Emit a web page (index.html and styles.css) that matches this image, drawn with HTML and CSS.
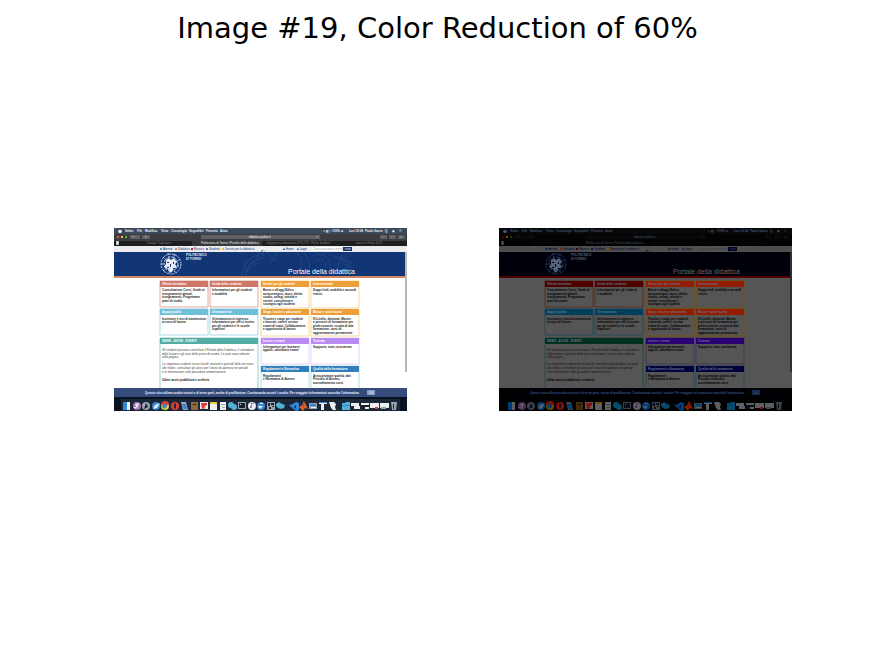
FILE: index.html
```html
<!DOCTYPE html>
<html lang="en">
<head>
<meta charset="utf-8">
<meta name="viewport" content="width=device-width, initial-scale=1">
<title>Image #19, Color Reduction of 60%</title>
<link rel="stylesheet" href="styles.css">
</head>
<body>
<main class="figure">
<h1 class="figure-title">Image #19, Color Reduction of 60%</h1>
<div class="panels">
<svg class="panel original" viewBox="0 0 293 183" role="img" aria-label="Original image">
<defs>
<g id="capture">
<rect class="page" width="293" height="183"/>
<rect class="menubar" width="293" height="6"/>
<rect class="toolbar" y="6" width="293" height="7"/>
<rect class="tabs" y="13" width="293" height="6"/>
<rect class="tab-active" x="78" y="13" width="70" height="6"/>
<rect class="links" y="18" width="293" height="6"/>
<g class="t3 bold pale">
<path d="M5 2h2l1 1-1 2H5L4 3z"/>
<text x="11" y="4">Safari</text><text x="23" y="4">File</text><text x="31" y="4">Modifica</text><text x="47" y="4">Vista</text><text x="57" y="4">Cronologia</text><text x="75" y="4">Segnalibri</text><text x="92" y="4">Finestra</text><text x="106" y="4">Aiuto</text>
<text x="209" y="4">⌁ ◧ ⌂ 100% ▰</text><text x="235" y="4">Lun 15:04</text><text x="251" y="4">Paolo Garza</text><text x="271" y="4">Q</text><text x="278" y="4">◉</text><text x="285" y="4">☰</text>
</g>
<path class="red" d="M3 8h2v2H3z"/><path class="amber" d="M7 8h2v2H7z"/><path class="green" d="M11 8h2v2h-2z"/>
<path class="button" d="M16 7h10v4H16zM28 7h8v4h-8zM87 7h119v4H87zM266 7h7v4h-7zM275 7h7v4h-7zM284 7h7v4h-7z"/>
<g class="t3 pale"><text x="18" y="10">‹ ›</text><text x="31" y="10">▯</text><text x="135" y="10">didattica.polito.it</text><text x="202" y="10">×</text><text x="268" y="10">↓</text><text x="277" y="10">↑</text><text x="286" y="10">+</text></g>
<path class="leaf" d="M2 13h3v4H2z"/><path class="page" d="M3 14h1v2H3z"/>
<g class="t3 dim"><text x="33" y="16">Google Traduttore</text><text x="153" y="16">Ingegneria informatica POLITO · Polito Studenti</text><text x="242" y="16">annunci Polito 2018</text></g>
<text class="t3 pale" x="87" y="16">Politecnico di Torino | Portale della didattica</text>
<path class="cyan" d="M46 20h2v2h-2z"/><path class="orange" d="M61 20h2v2h-2z"/><path class="crimson" d="M77 20h2v2h-2z"/><path class="violet" d="M92 20h2v2h-2z"/><path class="amber" d="M108 20h2v2h-2z"/>
<g class="t3 navy-ink"><text x="49" y="22">Ateneo</text><text x="64" y="22">Didattica</text><text x="80" y="22">Ricerca</text><text x="95" y="22">Studenti</text><text x="111" y="22">Servizi per la didattica</text><text x="169" y="22">■ Home</text><text x="183" y="22">■ Login</text></g>
<path class="page" d="M198 19h32v4h-32z"/><text class="t3 muted" x="199" y="22">Cerca persone e strutture</text>
<path class="navy" d="M229 19h9v4h-9z"/><text class="t3 pale" x="231" y="22">it en</text>
<path class="banner" d="M0 24h291v24H0z"/>
<g class="watermark"><path d="M128 48a22 22 0 0 1 22-22M132 48a18 18 0 0 1 18-18M182 25a14 14 0 0 1 0 23M190 25a28 28 0 0 1 5 23M153 24l9 10M164 24l-8 12M197 29c9-6 22 0 19 12M202 33c6-4 13 2 9 9M220 28l18 7M229 26l-7 17"/><text class="mark" x="134" y="46" transform="rotate(-48 134 46)">POLITE</text><text class="mark" x="226" y="29" transform="rotate(62 226 29)">TOR</text></g>
<g class="seal"><circle cx="57" cy="36" r="10"/><circle cx="57" cy="36" r="7"/><path d="M49 29l3 3M54 25l1 4M61 26l-2 4M66 31l-4 3M47 36h4M63 38h4M49 43l4-3M60 43l3 2M55 45l1-4"/><path class="seal-body" d="M52 32l3-2 2 2 3-2 3 4-2 2 2 3-4 3-2 3-3-4-4-2 2-3z"/><path class="seal-detail" d="M53 34h2v1h-2zM59 34h1v2h-1zM56 36h1v3h-1zM53 39h2v1h-2zM59 40h2v1h-2z"/></g>
<g class="brand"><text x="72" y="28">POLITECNICO</text><text x="72" y="32">DI TORINO</text></g>
<text class="portal" x="174" y="46">Portale della didattica</text>
<rect class="rule" y="48" width="291" height="2"/>

<path class="salmon-line" d="M46 53h48v26H46zM96 53h48v26H96z"/>
<path class="gold-line" d="M147 53h48v27h-48zM197 53h48v27h-48zM147 82h48v26h-48zM197 82h48v26h-48z"/>
<path class="sky-line" d="M46 81h48v26H46zM96 81h48v26H96z"/>
<path class="teal-line" d="M46 110h98v60H46z"/>
<path class="purple-line" d="M147 110h48v26h-48zM197 110h48v26h-48z"/>
<path class="azure-line" d="M147 138h48v32h-48zM197 138h48v32h-48z"/>
<path class="salmon" d="M46 53h48v6H46zM96 53h48v6H96z"/>
<path class="gold" d="M147 53h48v6h-48zM197 53h48v6h-48zM147 81h48v6h-48zM197 81h48v6h-48z"/>
<path class="sky" d="M46 81h48v6H46zM96 81h48v6H96z"/>
<path class="teal" d="M46 110h98v6H46z"/>
<path class="purple" d="M147 110h48v6h-48zM197 110h48v6h-48z"/>
<path class="azure" d="M147 138h48v6h-48zM197 138h48v6h-48z"/>
<g class="card-title">
<text x="48" y="57">Offerta formativa</text><text x="98" y="57">Guida dello studente</text><text x="149" y="57">Servizi per gli studenti</text><text x="199" y="57">Internazionale</text>
<text x="48" y="85">Apply@polito</text><text x="98" y="85">Orientamento</text><text x="149" y="85">Stage, tirocini e placement</text><text x="199" y="85">Master e post laurea</text>
<text x="48" y="114">NEWS - AVVISI - EVENTI</text><text x="149" y="114">Lauree e esami</text><text x="199" y="114">Tutorato</text>
<text x="149" y="142">Regolamenti e Normativa</text><text x="199" y="142">Qualità della formazione</text>
</g>
<g class="copy">
<text x="48" y="63">Consultazione Corsi, Guide ai</text><text x="48" y="67">insegnamenti attivati,</text><text x="48" y="70">insegnamenti, Programma</text><text x="48" y="74">piani di studio</text>
<text x="98" y="63">Informazioni per gli studenti</text><text x="98" y="67">e modalità</text>
<text x="149" y="63">Borse e alloggi Edisu,</text><text x="149" y="67">assicurazione, tasse, diritto</text><text x="149" y="70">studio, collegi, attività e</text><text x="149" y="74">servizi, consulenza e</text><text x="149" y="77">sostegno agli studenti</text>
<text x="199" y="63">Doppi titoli, mobilità e accordi</text><text x="199" y="67">estero</text>
<text x="48" y="92">Iscrizione e test di ammissione</text><text x="48" y="95">ai corsi di laurea</text>
<text x="98" y="92">Orientamento in ingresso</text><text x="98" y="95">informazioni per chi si iscrive</text><text x="98" y="99">per gli studenti e le scuole</text><text x="98" y="102">superiori</text>
<text x="149" y="92">Tirocini e stage per studenti</text><text x="149" y="95">e laureati, career service</text><text x="149" y="99">esami di stato, Collaborazioni</text><text x="149" y="102">e opportunità di lavoro</text>
<text x="199" y="92">III Livello, dottorati, Master</text><text x="199" y="95">e percorsi di formazione per</text><text x="199" y="99">professionisti, scuola di alta</text><text x="199" y="102">formazione, corsi di</text><text x="199" y="106">aggiornamento permanente</text>
<text x="149" y="120">Informazioni per laurearsi</text><text x="149" y="123">appelli, calendario esami</text><text x="199" y="120">Supporto, tutor, assistenza</text>
<text x="149" y="149">Regolamenti</text><text x="149" y="152">e Normativa di Ateneo</text>
<text x="199" y="149">Assicurazione qualità, dati</text><text x="199" y="152">Presidio di Ateneo,</text><text x="199" y="156">accreditamento corsi</text>
<text x="48" y="153">Ultimi avvisi pubblicati e archivio</text>
</g>
<g class="copy light">
<text x="48" y="123">Gli studenti possono consultare il Portale della Didattica, il calendario</text><text x="48" y="127">delle lezioni e gli orari delle prove di esame. Le aule sono indicate</text><text x="48" y="130">nella pagina.</text>
<text x="48" y="137">La segreteria studenti riceve lunedì, martedì e giovedì dalle ore nove</text><text x="48" y="141">alle tredici, consultare gli avvisi per l'orario di apertura nei periodi</text><text x="48" y="145">e le informazioni sulle procedure amministrative.</text>
</g>
<path class="scroll" d="M291 24h2v120h-2z"/>
<path class="notice" d="M0 160h293v9H0z"/>
<text class="notice-copy" x="31" y="166">Questo sito utilizza cookie tecnici e di terze parti, anche di profilazione. Continuando accetti i cookie. Per maggiori informazioni consulta l'informativa.</text>
<path class="ok" d="M253 162h8v5h-8z"/><text class="t3 pale" x="255" y="166">OK</text>
<path class="dock" d="M0 169h293v14H0z"/><path class="dock-shelf" d="M7 171h279v12H7z"/>
<g class="dock-icons">
<path class="w" d="M9 174h7v8H9z"/><path class="b" d="M9 174h4v8H9z"/>
<circle class="v" cx="23" cy="178" r="4"/><path class="w" d="M21 176l4-1-2 6zM19 179h3v2z"/>
<circle class="s" cx="32" cy="178" r="4"/><path class="d" d="M30 181l2-6 2 4z"/>
<circle class="b" cx="42" cy="178" r="4"/><path class="w" d="M39 181l2-4 5-2-3 5z"/>
<circle class="y" cx="51" cy="178" r="4"/><path class="r" d="M47 177a4 4 0 0 1 8 0z"/><path class="g" d="M47 178l4 4-1-5z"/><circle class="b" cx="51" cy="178" r="2"/>
<circle class="r" cx="61" cy="178" r="4"/><ellipse class="d" cx="61" cy="178" rx="1" ry="3"/>
<path class="s" d="M67 174h5l2 8h-5z"/><path class="b" d="M68 176h3l3 5h-4z"/>
<path class="n" d="M77 174h7v8h-7z"/><path class="d" d="M79 176h3v1h-3z"/>
<path class="w" d="M86 174h8v7h-8z"/><path class="r" d="M87 175h6v2l-3 2 2 1-4 1z"/>
<path class="w" d="M96 174h7v8h-7z"/><path class="y" d="M96 174h7v2h-7z"/>
<path class="w" d="M106 174h6v8h-6z"/><path class="s" d="M107 176h4v1h-4zM108 179h3v1h-3z"/>
<circle class="c" cx="117" cy="177" r="3"/><circle class="c" cx="120" cy="179" r="3"/>
<path class="s" d="M124 174h8v7h-8z"/><path class="d" d="M125 175h6v5h-6z"/><path class="w" d="M126 176h1v1h-1z"/>
<circle class="w" cx="138" cy="178" r="4"/><path class="v" d="M137 175h3v1h-2v4h-2v-2h1z"/>
<circle class="b" cx="147" cy="178" r="4"/><path class="w" d="M144 178h5l-3 3zM146 175h3v1h-3z"/>
<path class="s" d="M153 174h8v8h-8z"/><path class="d" d="M154 175h2v3h-2zM157 175h3v2h-3zM155 179h2v2h-2zM158 178h2v1h-2z"/>
<path class="c" d="M162 176l3-2 3 2 3 1-1 3-3 1-3-1-2-2z"/>
<path class="b" d="M182 174l3 1v7l-3 1-6-5-1-2 2 1z"/><path class="d" d="M182 177v4l-2-2z"/>
<path class="o" d="M185 179l3-2 2-4 4 8-3-1-2 3z"/><path class="r" d="M188 178l2-5v8z"/>
<path class="s" d="M195 175h8v6h-8z"/><path class="b" d="M196 176h6v2h-6z"/><path class="w" d="M197 179h5v1h-5z"/>
<path class="w" d="M205 174h8v2h-3v6h-3v-6h-2z"/><path class="b" d="M205 174h8v1h-8z"/>
<path class="w" d="M215 174h5l2 2-1 3 1 3h-3l-2-2-1-3z"/>
<path class="c" d="M228 175h3l1-1h4v8h-8z"/><path class="b" d="M228 177h8v1h-8z"/>
<path class="w" d="M237 175h8v3h1v3h-6v-3h-3z"/><path class="d" d="M247 175h8v6h-8z"/><path class="w" d="M247 175h8v2h-8zM251 179h4v2h-4z"/>
<path class="w" d="M256 175h9v5h-9zM266 175h9v5h-9z"/><path class="r" d="M261 179h3v2h-3z"/><path class="s" d="M267 179h5v2h-5z"/>
<path class="s" d="M277 174h6l-1 8h-4z"/><path class="d" d="M279 176h1v5h-1z"/>
</g>
</g>
</defs>
<use href="#capture"/>
</svg>
<svg class="panel reduced" viewBox="0 0 293 183" role="img" aria-label="Image with colors reduced by 60%"><use href="#capture"/></svg>
</div>
</main>
</body>
</html>
```
FILE: styles.css
```css
* { box-sizing: border-box; }
body { margin: 0; background: #fff; color: #000; font-family: "DejaVu Sans", sans-serif; }
.figure { min-height: 100vh; padding-top: 10px; }
.figure-title { margin: 0; font-size: 29px; line-height: 36px; font-weight: 400; text-align: center; }
.panels { display: grid; grid-template-columns: 1fr 1fr; gap: 92px; padding: 182px 83px 0 114px; }
.panel { display: block; width: 100%; height: auto; overflow: hidden; font-family: "Liberation Sans", sans-serif; }

.original {
  --page: #fff; --menubar: #3c4a5d; --toolbar: #3b3c3e; --tabs: #1d1e20; --tab: #37383a; --links: #ececee;
  --pale: #eef2f7; --dim: #7b7b7b; --muted: #999; --button: #606164; --navy: #163574; --ink: #1c1c1c; --light: #444;
  --banner: #113575; --water: #224886; --seal: #c5d4e8; --seal-fill: #e8eff8; --rule: #d18860; --portal: #fff; --title: #fff;
  --salmon: #ce7766; --gold: #ec9f38; --sky: #70bfd9; --teal: #51ada5; --purple: #b98bf3; --azure: #327fbd;
  --salmon-line: #dfa79d; --gold-line: #f9d899; --sky-line: #add9e8; --teal-line: #9dcfca; --purple-line: #e3d2fa; --azure-line: #b7dcef;
  --scroll: #b8b8ba; --notice: #344b7c; --notice-ink: #f0f5ff; --ok: #899bc1; --dock: #07131f; --shelf: #1b2636;
  --red: #e9544c; --amber: #f6bd38; --green: #55b24b; --cyan: #4ba3d3; --orange: #ed893a; --crimson: #b52d47; --violet: #8b62c0; --leaf: #a7c6a3;
  --icon-filter: none;
}
.reduced {
  --page: #555; --menubar: #08080a; --toolbar: #030303; --tabs: #000; --tab: #020202; --links: #4e4e4e;
  --pale: #40516b; --dim: #151515; --muted: #303030; --button: #080808; --navy: #000022; --ink: #000; --light: #101010;
  --banner: #00000b; --water: #00000b; --seal: #203d6f; --seal-fill: #566479; --rule: #500000; --portal: #666; --title: #697286;
  --salmon: #4e0000; --gold: #941c00; --sky: #00405d; --teal: #00301f; --purple: #2c0075; --azure: #00003d;
  --salmon-line: #562f29; --gold-line: #77500a; --sky-line: #274b53; --teal-line: #254b40; --purple-line: #493657; --azure-line: #2c4c5d;
  --scroll: #303030; --notice: #000005; --notice-ink: #365180; --ok: #182951; --dock: #000; --shelf: #000;
  --red: #500000; --amber: #815000; --green: #003f00; --cyan: #002469; --orange: #852000; --crimson: #400000; --violet: #19005a; --leaf: #304030;
  --icon-filter: brightness(0.4) saturate(2);
}
.page { fill: var(--page); }
.menubar { fill: var(--menubar); }
.toolbar { fill: var(--toolbar); }
.tabs { fill: var(--tabs); }
.tab-active { fill: var(--tab); }
.links { fill: var(--links); }
.pale { fill: var(--pale); }
.dim { fill: var(--dim); }
.muted { fill: var(--muted); }
.button { fill: var(--button); }
.navy { fill: var(--navy); }
.navy-ink { fill: var(--navy); }
.banner { fill: var(--banner); }
.watermark { fill: none; stroke: var(--water); }
.mark { font-size: 8px; fill: var(--water); stroke: none; }
.seal { fill: none; stroke: var(--seal); stroke-dasharray: 2 1; }
.seal-body { fill: var(--seal-fill); stroke: none; }
.seal-detail { fill: var(--banner); stroke: none; }
.brand { font-size: 3px; font-weight: 700; fill: var(--seal-fill); }
.portal { font-size: 7px; fill: var(--portal); }
.rule { fill: var(--rule); }
.scroll { fill: var(--scroll); }
.notice { fill: var(--notice); }
.notice-copy { font-size: 3px; font-weight: 700; fill: var(--notice-ink); }
.ok { fill: var(--ok); }
.dock { fill: var(--dock); }
.dock-shelf { fill: var(--shelf); }
.t3 { font-size: 3px; }
.bold { font-weight: 700; }
.copy { font-size: 3px; font-weight: 700; fill: var(--ink); }
.light { font-weight: 400; fill: var(--light); }
.card-title { font-size: 3px; font-weight: 700; fill: var(--title); }

.salmon { fill: var(--salmon); }
.gold { fill: var(--gold); }
.sky { fill: var(--sky); }
.teal { fill: var(--teal); }
.purple { fill: var(--purple); }
.azure { fill: var(--azure); }
.salmon-line, .gold-line, .sky-line, .teal-line, .purple-line, .azure-line { fill: var(--page); stroke-width: 1; }
.salmon-line { stroke: var(--salmon-line); }
.gold-line { stroke: var(--gold-line); }
.sky-line { stroke: var(--sky-line); }
.teal-line { stroke: var(--teal-line); }
.purple-line { stroke: var(--purple-line); }
.azure-line { stroke: var(--azure-line); }
.red { fill: var(--red); }
.amber { fill: var(--amber); }
.green { fill: var(--green); }
.cyan { fill: var(--cyan); }
.orange { fill: var(--orange); }
.crimson { fill: var(--crimson); }
.violet { fill: var(--violet); }
.leaf { fill: var(--leaf); }

.dock-icons { filter: var(--icon-filter); }
.w { fill: #eceff2; }
.b { fill: #3387d6; }
.c { fill: #54afd5; }
.s { fill: #9ba5b0; }
.d { fill: #17202c; }
.r { fill: #d94036; }
.g { fill: #43a94c; }
.y { fill: #edc746; }
.o { fill: #d5652e; }
.n { fill: #8d683e; }
.v { fill: #a874b7; }
```
